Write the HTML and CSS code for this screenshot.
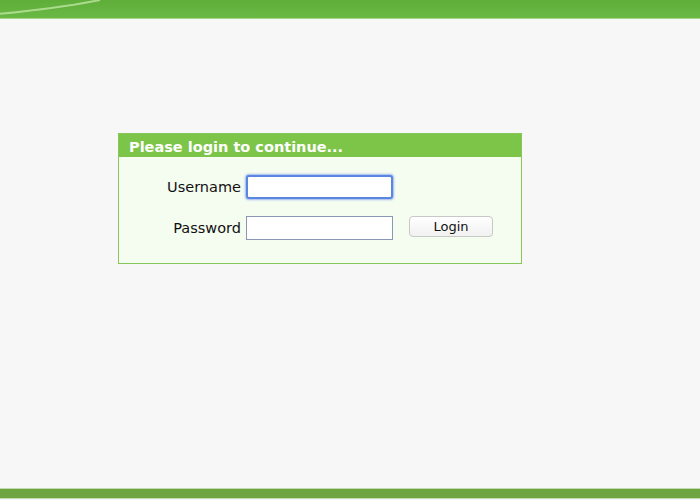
FILE: index.html
```html
<!DOCTYPE html>
<html>
<head>
<meta charset="utf-8">
<link rel="stylesheet" href="styles.css">
</head>
<body>
<div class="page">
  <header class="topbar">
    <svg class="swoosh" width="140" height="18" viewBox="0 0 140 18"><path d="M-2 14 C30 11 70 6 100 0" stroke="#c4e8a8" stroke-width="2" fill="none" opacity="0.75"/></svg>
  </header>
  <main class="main">
    <form class="login">
      <div class="login-title">Please login to continue...</div>
      <div class="login-body">
        <div class="row">
          <label class="lbl">Username</label>
          <input class="field focus" type="text">
        </div>
        <div class="row">
          <label class="lbl">Password</label>
          <input class="field" type="password">
          <button type="button" class="btn">Login</button>
        </div>
      </div>
    </form>
  </main>
  <footer class="bottombar"></footer>
</div>
</body>
</html>
```
FILE: styles.css
```css
html, body { margin: 0; padding: 0; }
body { background: #f7f7f7; font-family: "DejaVu Sans", Verdana, sans-serif; }
.page { height: 500px; display: flex; flex-direction: column; }
.topbar {
  height: 18px;
  background: linear-gradient(#5fae39, #6ab845);
  border-bottom: 1px solid #a6d48a;
  overflow: hidden;
}
.swoosh { display: block; }
.main { flex: 1; padding: 114px 0 0 118px; }
.login {
  width: 402px;
  border: 1px solid #86c75a;
  background: #f5fcf0;
}
.login-title {
  height: 23px;
  background: #7dc548;
  color: #fff;
  font-weight: bold;
  font-size: 14.5px;
  line-height: 27px;
  padding-left: 10px;
}
.login-body { padding: 18px 0 23px 0; display: flex; flex-direction: column; gap: 17px; }
.row { display: flex; align-items: center; }
.lbl { width: 122px; text-align: right; font-size: 14.5px; color: #111; padding-right: 5px; }
.field {
  box-sizing: border-box;
  width: 147px; height: 24px;
  margin: 0;
  border: 1px solid #8a96b8;
  background: #fff;
  padding: 0 3px;
}
.field.focus {
  border: 2px solid #5b86df;
  border-radius: 3px;
  box-shadow: 0 0 2px 1px #9bb8f0;
}
.btn {
  margin-left: 16px;
  width: 84px; height: 21px;
  border: 1px solid #c8c8c8;
  border-radius: 4px;
  background: linear-gradient(#fff, #f1f1f1);
  font-family: "DejaVu Sans", Verdana, sans-serif;
  font-size: 13px;
  color: #111;
  padding: 0;
  align-self: flex-start;
}
.bottombar {
  height: 9px;
  margin-bottom: 1px;
  background: #6ea441;
  border-top: 1px solid #c3dcaf;
  border-bottom: 1px solid #c3dcaf;
}
```
